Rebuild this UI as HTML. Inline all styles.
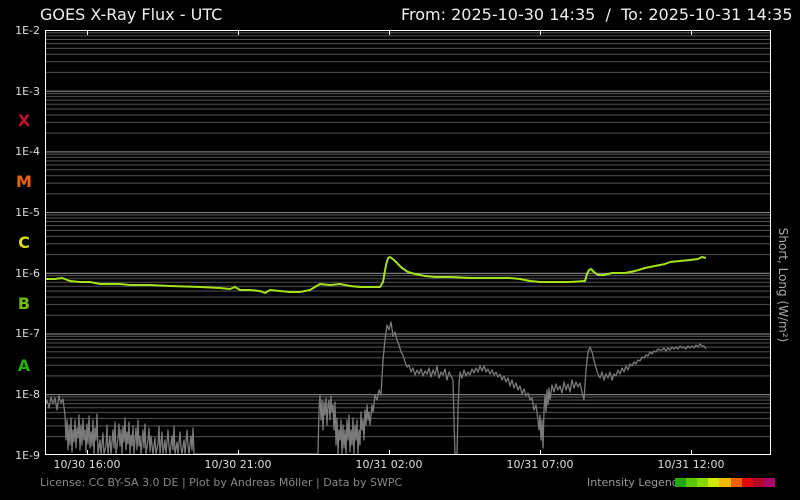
<!DOCTYPE html>
<html><head><meta charset="utf-8"><style>
body{margin:0;background:#000;width:800px;height:500px;overflow:hidden;font-family:"DejaVu Sans","Liberation Sans",sans-serif}
svg{display:block}
text{white-space:pre}
</style></head><body>
<svg width="800" height="500" viewBox="0 0 800 500" xmlns="http://www.w3.org/2000/svg">
<defs>
<pattern id="g" patternUnits="userSpaceOnUse" x="0" y="30" width="800" height="60.7">
<rect width="800" height="60.7" fill="#000"/>
<line x1="0" x2="800" y1="0.5" y2="0.5" stroke="#9a9a9a" stroke-width="1"/>
<g stroke="#555" stroke-width="1">
<line x1="0" x2="800" y1="2.8" y2="2.8"/><line x1="0" x2="800" y1="5.9" y2="5.9"/>
<line x1="0" x2="800" y1="9.4" y2="9.4"/><line x1="0" x2="800" y1="13.5" y2="13.5"/>
<line x1="0" x2="800" y1="18.3" y2="18.3"/><line x1="0" x2="800" y1="24.2" y2="24.2"/>
<line x1="0" x2="800" y1="31.7" y2="31.7"/><line x1="0" x2="800" y1="42.4" y2="42.4"/>
</g></pattern>
<clipPath id="c"><rect x="45" y="30" width="726" height="425"/></clipPath>
</defs>
<rect x="45" y="30" width="726" height="425" fill="url(#g)"/>
<g clip-path="url(#c)" fill="none" stroke-linejoin="round">
<polyline stroke="#7a7a7a" stroke-width="1.3" points="45,405 47,400 49,408 51,397 53,404 55,398 57,410 59,396 61,403 63,399 65,415 66,440 67,420 68,450 69,425 70,445 71,418 72,452 73,430 74,442 75,420 76,448 77,428 78,438 79,415 80,450 81,425 82,445 83,419 84,440 85,430 86,452 87,424 88,444 89,416 90,448 91,432 92,446 93,420 94,454 95,428 96,440 97,414 98,454 100,440 101,454 103,433 104,454 106,446 107,425 108,454 110,436 111,454 113,430 114,448 115,422 116,454 118,438 119,424 120,446 121,430 122,454 123,426 124,442 125,418 126,450 127,432 128,444 129,422 130,454 131,435 132,446 133,426 134,454 135,440 136,428 137,450 138,420 139,446 140,436 141,454 143,430 144,448 145,424 146,454 148,440 149,428 150,452 151,436 153,454 155,438 156,454 158,444 159,426 160,454 162,432 163,454 165,440 166,454 168,430 169,446 170,454 172,436 173,450 174,426 175,454 177,442 178,454 180,432 181,448 182,454 184,440 185,454 187,430 188,446 189,454 191,436 192,450 193,428 194,454 196,454 318,454 319,410 320,395 321,420 322,400 323,430 324,402 325,415 326,398 327,425 328,405 329,400 330,420 331,396 332,412 333,405 334,430 335,402 336,445 337,418 338,454 339,430 340,440 341,420 342,454 343,425 344,448 345,430 346,454 347,420 348,440 349,415 350,452 351,430 352,445 353,418 354,454 355,425 356,440 357,420 358,454 359,430 360,445 361,412 362,430 363,420 364,440 365,410 366,425 367,405 368,420 369,412 370,425 372,405 373,412 375,395 377,400 379,390 381,395 383,360 385,340 387,325 389,330 391,322 393,336 395,332 397,340 399,345 401,352 403,355 405,362 407,367 409,365 411,372 413,368 415,375 417,370 419,374 421,369 423,376 425,371 427,374 429,368 431,377 433,370 435,375 437,366 439,378 441,372 443,375 445,369 447,380 449,372 451,376 453,380 454,420 455,454 457,454 458,410 459,385 460,372 462,378 464,370 466,376 468,372 470,375 472,369 474,373 476,368 478,372 480,366 482,371 484,366 486,372 488,369 490,374 492,370 494,375 496,372 498,377 500,374 502,380 504,376 506,382 508,378 510,386 512,380 514,388 516,383 518,390 520,386 522,394 524,389 526,396 528,393 530,400 532,398 534,410 536,405 538,420 539,430 540,415 541,440 542,420 543,448 544,410 545,395 546,412 547,390 548,405 549,388 550,400 552,385 554,392 556,384 558,390 560,386 562,393 564,382 566,390 568,384 570,392 572,380 574,388 576,382 578,387 580,383 582,392 584,400 586,370 588,352 590,347 592,352 594,360 596,368 598,374 600,378 602,372 604,380 606,374 608,378 610,372 612,380 614,374 616,376 618,370 620,374 622,368 624,372 626,366 628,370 630,364 632,366 634,362 636,364 638,360 640,361 642,357 644,358 646,355 648,356 650,352 652,354 654,351 656,352 658,349 660,350 662,350 664,348 666,351 668,348 670,350 672,347 674,349 676,347 678,349 680,346 682,348 684,347 686,349 688,346 690,348 692,346 694,348 696,345 698,347 700,344 702,346 704,346 706,349"/>
<polyline stroke="#a6e01a" stroke-width="2" points="45,279 55,279 62,278 70,281 80,282 90,282 100,284 110,284 120,284 130,285 150,285 170,286 200,287 220,288 230,289 235,287 240,290 250,290 260,291 265,293 270,290 280,291 290,292 300,292 310,290 315,287 320,284 330,285 340,284 350,286 360,287 370,287 380,287 383,282 386,265 388,258 390,257 394,260 398,264 402,268 408,272 415,274 425,276 435,277 450,277 470,278 490,278 510,278 520,279 530,281 540,282 555,282 570,282 585,281 587,274 589,270 591,269 594,272 598,275 604,275 612,273 625,273 635,271 645,268 655,266 665,264 670,262 680,261 690,260 698,259 702,257 706,258"/>
</g>
<rect x="45.5" y="30.5" width="725" height="424" fill="none" stroke="#fff" stroke-width="1"/>
<g stroke="#fff" stroke-width="1">
<line x1="87.5" x2="87.5" y1="30" y2="35"/><line x1="238.5" x2="238.5" y1="30" y2="35"/><line x1="389.5" x2="389.5" y1="30" y2="35"/><line x1="540.5" x2="540.5" y1="30" y2="35"/><line x1="691.5" x2="691.5" y1="30" y2="35"/>
<line x1="87.5" x2="87.5" y1="450" y2="455"/><line x1="238.5" x2="238.5" y1="450" y2="455"/><line x1="389.5" x2="389.5" y1="450" y2="455"/><line x1="540.5" x2="540.5" y1="450" y2="455"/><line x1="691.5" x2="691.5" y1="450" y2="455"/>
</g>
<g fill="#eee" font-size="16">
<text x="40" y="20">GOES X-Ray Flux - UTC</text>
<text x="401" y="20">From: 2025-10-30 14:35  /  To: 2025-10-31 14:35</text>
</g>
<g fill="#ddd" font-size="11" text-anchor="end">
<text x="40" y="34">1E-2</text><text x="40" y="95">1E-3</text><text x="40" y="155">1E-4</text><text x="40" y="216">1E-5</text><text x="40" y="277">1E-6</text><text x="40" y="337">1E-7</text><text x="40" y="398">1E-8</text><text x="40" y="459">1E-9</text>
</g>
<g font-size="16" text-anchor="middle" font-weight="bold">
<text x="24" y="126" fill="#c4102a">X</text>
<text x="24" y="187" fill="#f06010">M</text>
<text x="24" y="248" fill="#d8e000">C</text>
<text x="24" y="309" fill="#70c010">B</text>
<text x="24" y="371" fill="#20b010">A</text>
</g>
<g fill="#ddd" font-size="11" text-anchor="middle">
<text x="87" y="468">10/30 16:00</text><text x="238" y="468">10/30 21:00</text><text x="389" y="468">10/31 02:00</text><text x="540" y="468">10/31 07:00</text><text x="691" y="468">10/31 12:00</text>
</g>
<text x="783" y="285" fill="#aaa" font-size="12" text-anchor="middle" transform="rotate(90 783 285)" dy="4">Short, Long (W/m²)</text>
<text x="40" y="486" fill="#888" font-size="11">License: CC BY-SA 3.0 DE | Plot by Andreas Möller | Data by SWPC</text>
<text x="587" y="486" fill="#999" font-size="11">Intensity Legend</text>
<g>
<rect x="675" y="478" width="11" height="9" fill="#20a810"/><rect x="686" y="478" width="11" height="9" fill="#5cc800"/><rect x="697" y="478" width="11" height="9" fill="#88d800"/><rect x="708" y="478" width="11" height="9" fill="#d0e800"/><rect x="719" y="478" width="12" height="9" fill="#f0b800"/><rect x="731" y="478" width="11" height="9" fill="#f06000"/><rect x="742" y="478" width="11" height="9" fill="#e00808"/><rect x="753" y="478" width="11" height="9" fill="#b80828"/><rect x="764" y="478" width="11" height="9" fill="#a80868"/>
</g>
</svg>
</body></html>
